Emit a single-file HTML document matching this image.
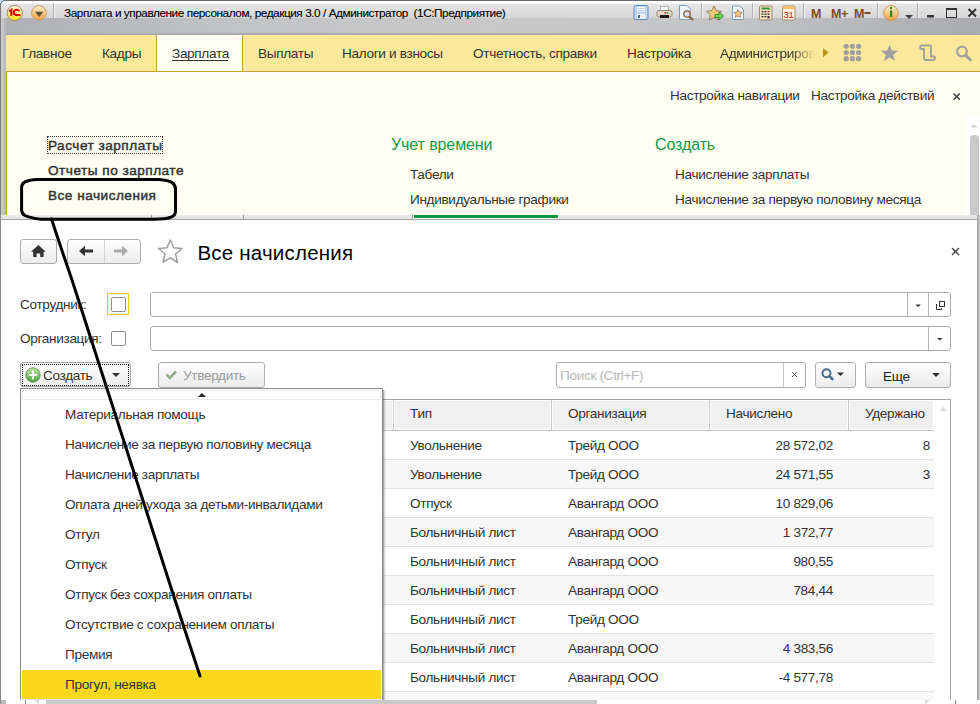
<!DOCTYPE html>
<html><head><meta charset="utf-8">
<style>
*{margin:0;padding:0;box-sizing:border-box}
html,body{width:980px;height:704px;overflow:hidden;background:#fff}
body{position:relative;font-family:"Liberation Sans",sans-serif;font-size:13.6px;letter-spacing:-0.33px;color:#333}
.a{position:absolute;white-space:nowrap}
.mi{top:46px;color:#333}
.tb{height:25px;border:1px solid #aeaeae;border-radius:3px;background:linear-gradient(#fefefe,#ececec)}
.cell{color:#333}
.dd{left:65px;color:#333}
.sep{width:1px;height:15px;top:3px;background:linear-gradient(#b8b8b8,#a8a8a8);border-right:1px solid #f4f4f4;width:2px}
</style></head><body>
<!-- ===== title bar ===== -->
<div class="a" style="left:0;top:0;width:980px;height:35px;background:linear-gradient(90deg,#aeb0b4 0%,#c3c4c6 25%,#c9c9c9 50%,#c3c4c6 75%,#a9abaf 100%)"></div>
<div class="a" style="left:0;top:0;width:980px;height:18px;background:linear-gradient(#ffffff 0,#fdfdfd 3px,#e6e6e6 4px,#d6d6d6 18px)"></div>
<div class="a" style="left:0;top:0;width:980px;height:1px;background:#6a6a6a"></div>
<div class="a" style="left:0;top:33px;width:980px;height:2px;background:#a9abb0"></div>
<div class="a" style="left:0;top:0;width:1px;height:704px;background:#7a7a7a"></div>
<div class="a" style="left:1px;top:18px;width:5px;height:197px;background:linear-gradient(90deg,#cfcfcf,#b4b5b9)"></div>
<svg class="a" style="left:0;top:0" width="8" height="8"><path d="M0 0 L6 0 Q0.5 0.5 0 6 Z" fill="#c9d6ea"/><path d="M6 0.5 Q0.5 0.5 0.5 6" fill="none" stroke="#707070" stroke-width="1"/></svg>
<div class="a" style="left:64px;top:6px;font-size:11.8px;letter-spacing:-0.45px;color:#000;-webkit-text-stroke:0.1px #000">Зарплата и управление персоналом, редакция 3.0 / Администратор&nbsp; (1С:Предприятие)</div>
<!-- title icons -->
<svg class="a" style="left:0;top:0" width="980" height="35">
 <defs>
  <linearGradient id="g1c" x1="0" y1="0" x2="0" y2="1"><stop offset="0" stop-color="#fffbe0"/><stop offset=".45" stop-color="#fff29a"/><stop offset="1" stop-color="#f6e200"/></linearGradient>
  <linearGradient id="gor" x1="0" y1="0" x2="0" y2="1"><stop offset="0" stop-color="#fdebd0"/><stop offset=".5" stop-color="#f7c98a"/><stop offset="1" stop-color="#f2a640"/></linearGradient>
 </defs>
 <circle cx="14.8" cy="12.9" r="7.6" fill="url(#g1c)" stroke="#a88a70" stroke-width="1"/>
 <path d="M9.2 11.3 L11.3 9.8 L11.3 15.8" fill="none" stroke="#e00000" stroke-width="2.2"/>
 <path d="M19.2 11.2 Q18.5 9.8 16.4 9.8 Q13.6 10 13.8 12.6 Q14 14.8 16 14.9 L20.4 14.9" fill="none" stroke="#e00000" stroke-width="2"/>
 <circle cx="38.9" cy="12.8" r="7.3" fill="url(#gor)" stroke="#c89a60" stroke-width="1"/>
 <path d="M35 11.7 L43.4 11.7 L39.2 17 Z" fill="#5e5340"/>
 <rect x="53" y="3" width="1" height="15" fill="#b0b0b0"/><rect x="54" y="3" width="1" height="15" fill="#f2f2f2"/>
 <!-- save -->
 <rect x="634" y="5.5" width="14" height="14" rx="1.5" fill="#c4dcf2" stroke="#5e8cc0"/>
 <rect x="636.5" y="6.5" width="9" height="5.5" fill="#fafcff" stroke="#9cbde0" stroke-width=".6"/>
 <rect x="637.5" y="8.2" width="7" height=".7" fill="#a8c4e0"/><rect x="637.5" y="10" width="7" height=".7" fill="#a8c4e0"/>
 <rect x="637" y="14" width="8" height="5" fill="#eef2f6"/><rect x="638" y="15" width="2" height="3" fill="#4a6a8a"/>
 <!-- print -->
 <rect x="660.5" y="6.5" width="8" height="5" fill="#fbfbfb" stroke="#a0a0a0" stroke-width=".8"/>
 <rect x="657" y="10.5" width="15" height="6.5" rx="2" fill="#e2d6c6" stroke="#9a8470" stroke-width="1"/>
 <rect x="660" y="15" width="9" height="3.2" fill="#1a1a1a"/>
 <rect x="660.5" y="18.2" width="8" height="1.3" fill="#f4f4f4" stroke="#aaa" stroke-width=".4"/>
 <circle cx="665.3" cy="12.8" r=".9" fill="#e02020"/><circle cx="667.6" cy="12.8" r=".9" fill="#20b020"/>
 <!-- preview -->
 <path d="M679.5 5.5 L687 5.5 L690 8.5 L690 19.5 L679.5 19.5 Z" fill="#f2f6fb" stroke="#7c9cc0"/>
 <circle cx="687" cy="14" r="3.2" fill="#cfe0f4" stroke="#8a6038" stroke-width="1.3"/>
 <path d="M689 16.5 L693 20" stroke="#8a5a30" stroke-width="2.2"/>
 <rect x="701" y="3" width="1" height="15" fill="#b0b0b0"/><rect x="702" y="3" width="1" height="15" fill="#f2f2f2"/>
 <!-- star arrow -->
 <path d="M714 6 L716.3 10.7 L721.5 11.3 L717.7 14.8 L718.7 20 L714 17.5 L709.3 20 L710.3 14.8 L706.5 11.3 L711.7 10.7 Z" fill="#f6c879" stroke="#7a6a50" stroke-width=".8"/>
 <path d="M715 14.5 L719 14.5 L719 12 L723.5 16 L719 20 L719 17.5 L715 17.5 Z" fill="#6cd05a" stroke="#2f8a2a" stroke-width=".9"/>
 <!-- doc star -->
 <path d="M732.5 6 L740 6 L743.5 9.5 L743.5 19.5 L732.5 19.5 Z" fill="#f8fbff" stroke="#7c9cc0"/>
 <path d="M738 9.5 L739.3 12.2 L742.2 12.5 L740 14.5 L740.6 17.4 L738 16 L735.4 17.4 L736 14.5 L733.8 12.5 L736.7 12.2 Z" fill="#f6c879" stroke="#7a6a50" stroke-width=".7"/>
 <rect x="752" y="3" width="1" height="15" fill="#b0b0b0"/><rect x="753" y="3" width="1" height="15" fill="#f2f2f2"/>
 <!-- calc -->
 <rect x="759.5" y="6" width="12.5" height="14" rx="1" fill="#f7e3bd" stroke="#9a8a70"/>
 <rect x="761.5" y="7.5" width="8.5" height="2" fill="#3a9a3a"/>
 <g fill="#333"><rect x="761.5" y="11" width="2" height="1.3"/><rect x="764.5" y="11" width="2" height="1.3"/><rect x="767.5" y="11" width="2" height="1.3" fill="#d02020"/>
 <rect x="761.5" y="13.5" width="2" height="1.3"/><rect x="764.5" y="13.5" width="2" height="1.3"/><rect x="767.5" y="13.5" width="2" height="1.3"/>
 <rect x="761.5" y="16" width="2" height="1.3"/><rect x="764.5" y="16" width="2" height="1.3"/><rect x="767.5" y="16" width="2" height="2.5"/></g>
 <!-- calendar -->
 <rect x="782.5" y="6" width="12.5" height="14" rx="1" fill="#fbf0dc" stroke="#a09070"/>
 <rect x="782.5" y="6" width="12.5" height="3" fill="#f0c070"/>
 <text x="783.6" y="18.3" font-family="Liberation Sans" font-size="9.5" fill="#e02010">31</text>
 <rect x="803" y="3" width="1" height="15" fill="#b0b0b0"/><rect x="804" y="3" width="1" height="15" fill="#f2f2f2"/>
 <g font-family="Liberation Sans" font-weight="bold" font-size="12.5" fill="#7c4c24">
  <text x="811" y="18">M</text><text x="831" y="18">M+</text><text x="854" y="18">M</text><rect x="864.5" y="12" width="6" height="2" fill="#7c4c24"/>
 </g>
 <rect x="877" y="3" width="1" height="15" fill="#b0b0b0"/><rect x="878" y="3" width="1" height="15" fill="#f2f2f2"/>
 <!-- info -->
 <circle cx="891" cy="13" r="7.4" fill="url(#gor)" stroke="#c08a40" stroke-width=".8"/>
 <rect x="890" y="10.5" width="2.2" height="6.5" fill="#2a8a20"/><circle cx="891.1" cy="8" r="1.2" fill="#2a8a20"/>
 <path d="M905 15 L913 15 L909 19 Z" fill="#444"/>
 <rect x="917" y="3" width="1" height="15" fill="#b0b0b0"/><rect x="918" y="3" width="1" height="15" fill="#f2f2f2"/>
 <!-- min max close -->
 <rect x="927" y="15" width="7" height="2.5" fill="#333"/>
 <rect x="946.5" y="8.5" width="10" height="9" fill="none" stroke="#333" stroke-width="1"/><rect x="946" y="8" width="11" height="2" fill="#333"/>
 <path d="M968.5 9 L976 16.5 M976 9 L968.5 16.5" stroke="#333" stroke-width="2"/>
</svg>

<!-- ===== menu bar ===== -->
<div class="a" style="left:6px;top:35px;width:974px;height:37px;background:#fbe99b;border-bottom:1px solid #c0a32c"></div>
<div class="a" style="left:156px;top:35px;width:87px;height:36px;background:#fefdf0;border-left:1px solid #c0a32c;border-right:1px solid #c0a32c"></div>
<div class="a mi" style="left:22px">Главное</div>
<div class="a mi" style="left:102px">Кадры</div>
<div class="a mi" style="left:172px">Зарплата</div>
<div class="a" style="left:172px;top:60px;width:56px;height:1px;background:#333"></div>
<div class="a mi" style="left:258px">Выплаты</div>
<div class="a mi" style="left:342px">Налоги и взносы</div>
<div class="a mi" style="left:473px">Отчетность, справки</div>
<div class="a mi" style="left:627px">Настройка</div>
<div class="a mi" style="left:720px;width:95px;overflow:hidden;-webkit-mask-image:linear-gradient(90deg,#000 75%,transparent)">Администрирование</div>
<svg class="a" style="left:780px;top:36px" width="200" height="35">
 <path d="M43 12 L48.5 16.5 L43 21.5 Z" fill="#b8941c"/>
 <g fill="#a0a0a0">
  <circle cx="66.2" cy="10.3" r="2.6"/><circle cx="72.4" cy="10.3" r="2.6"/><circle cx="78.6" cy="10.3" r="2.6"/>
  <circle cx="66.2" cy="16.5" r="2.6"/><circle cx="72.4" cy="16.5" r="2.6"/><circle cx="78.6" cy="16.5" r="2.6"/>
  <circle cx="66.2" cy="22.7" r="2.6"/><circle cx="72.4" cy="22.7" r="2.6"/><circle cx="78.6" cy="22.7" r="2.6"/>
 </g>
 <path d="M109.5 8.4 L111.8 14.4 L118.2 14.8 L113.2 18.8 L114.9 25.0 L109.5 21.5 L104.1 25.0 L105.8 18.8 L100.8 14.8 L107.2 14.4 Z" fill="#a0a0a0"/>
 <path d="M142 9.5 L150 9.5 Q151 9.5 151 10.5 L151 21.5 M142 9.5 Q140 9.5 140 11.5 Q140 13 142 13 L144 13 L144 22 Q144 24 146 24 L153 24 Q155 24 155 22 Q155 20.5 153 20.5 L151 20.5" fill="none" stroke="#a0a0a0" stroke-width="1.8"/>
 <circle cx="182" cy="15.5" r="4.8" fill="none" stroke="#a0a0a0" stroke-width="2.2"/>
 <path d="M185.5 19 L190.5 24" stroke="#a0a0a0" stroke-width="2.8" stroke-linecap="round"/>
</svg>

<!-- ===== nav panel ===== -->
<div class="a" style="left:6px;top:72px;width:974px;height:143px;background:#fefef2;border-left:1px solid #c0a32c"></div>
<div class="a" style="left:7px;top:72px;width:1px;height:143px;background:#fff"></div>
<div class="a" style="left:7px;top:72px;width:973px;height:1px;background:#fff"></div>
<div class="a" style="left:966px;top:115px;width:14px;height:100px;background:#fff"></div>
<div class="a" style="left:970px;top:135px;width:9px;height:80px;background:#c9c9c9;border-radius:4px 4px 0 0"></div>
<svg class="a" style="left:965px;top:118px" width="15" height="14"><path d="M5.5 9.5 L9 6 L12.5 9.5 Z" fill="#d2d2d2"/></svg>
<div class="a" style="left:670px;top:88px">Настройка навигации</div>
<div class="a" style="left:811px;top:88px">Настройка действий</div>
<svg class="a" style="left:949px;top:88px" width="14" height="14"><path d="M4.5 5.5 L10.8 11.8 M10.8 5.5 L4.5 11.8" stroke="#3a3a3a" stroke-width="1.5"/></svg>
<div class="a" style="left:47px;top:136px;width:116px;height:18px;border:1px dotted #333"></div>
<div class="a" style="left:48px;top:138px;-webkit-text-stroke:0.45px #333;letter-spacing:0.5px;color:#333">Расчет зарплаты</div>
<div class="a" style="left:48px;top:163px;-webkit-text-stroke:0.45px #333;letter-spacing:0.5px;color:#333">Отчеты по зарплате</div>
<div class="a" style="left:48px;top:188px;-webkit-text-stroke:0.45px #333;letter-spacing:0.5px;color:#333">Все начисления</div>
<div class="a" style="left:391px;top:135.5px;font-size:16px;letter-spacing:-0.1px;color:#169a48">Учет времени</div>
<div class="a" style="left:655px;top:135.5px;font-size:16px;letter-spacing:-0.1px;color:#169a48">Создать</div>
<div class="a" style="left:410px;top:167px">Табели</div>
<div class="a" style="left:410px;top:192px">Индивидуальные графики</div>
<div class="a" style="left:675px;top:167px">Начисление зарплаты</div>
<div class="a" style="left:675px;top:192px">Начисление за первую половину месяца</div>


<!-- ===== FORM ===== -->
<div class="a" style="left:0;top:215px;width:980px;height:489px;background:#fff"></div>
<div class="a" style="left:1px;top:215px;width:976px;height:5px;background:linear-gradient(#ececec,#dedede)"></div>
<div class="a" style="left:1px;top:219px;width:976px;height:1px;background:#a3a3a3"></div>
<div class="a" style="left:0;top:215px;width:1px;height:489px;background:#8a8a8a"></div>
<div class="a" style="left:977px;top:215px;width:3px;height:489px;background:linear-gradient(90deg,#9c9c9c,#b5b5b5,#cfcfcf)"></div>
<div class="a" style="left:413px;top:215px;width:146px;height:4px;background:#fff"></div>
<div class="a" style="left:414px;top:215px;width:144px;height:3px;background:#0e9440"></div>
<div class="a" style="left:151px;top:215px;width:1px;height:4px;background:#909090"></div>
<div class="a" style="left:243px;top:215px;width:1px;height:4px;background:#909090"></div>
<div class="a" style="left:412px;top:215px;width:1px;height:4px;background:#909090"></div>
<!-- nav buttons -->
<div class="a tb" style="left:20px;top:239px;width:37px;height:25px"></div>
<div class="a tb" style="left:67px;top:239px;width:74px;height:25px"></div>
<div class="a" style="left:104px;top:240px;width:1px;height:23px;background:#d4d4d4"></div>
<svg class="a" style="left:0;top:230px" width="200" height="45">
 <path d="M38.4 15 L31 21.8 L33.2 21.8 L33.2 27 L36.6 27 L36.6 23.5 L40.2 23.5 L40.2 27 L43.6 27 L43.6 21.8 L45.8 21.8 Z" fill="#333"/>
 <path d="M79 21 L85 15.8 L85 19.5 L93 19.5 L93 22.5 L85 22.5 L85 26.2 Z" fill="#333"/>
 <path d="M128 21 L122 15.8 L122 19.5 L114 19.5 L114 22.5 L122 22.5 L122 26.2 Z" fill="#ababab"/>
 <path d="M170.3 10.0 L173.6 17.8 L182.0 18.5 L175.6 24.0 L177.5 32.3 L170.3 27.9 L163.1 32.3 L165.0 24.0 L158.6 18.5 L167.0 17.8 Z" fill="none" stroke="#a0a0a0" stroke-width="1.6" stroke-linejoin="round"/>
</svg>
<div class="a" style="left:197.5px;top:241px;font-size:20.5px;letter-spacing:0.2px;color:#000">Все начисления</div>
<svg class="a" style="left:948px;top:244px" width="14" height="14"><path d="M4 4 L11 11 M11 4 L4 11" stroke="#444" stroke-width="1.4"/></svg>

<!-- filters -->
<div class="a" style="left:20px;top:297px">Сотрудник:</div>
<div class="a" style="left:20px;top:331px">Организация:</div>
<div class="a" style="left:107px;top:293px;width:22px;height:22px;border:1px solid #f5c518"></div>
<div class="a" style="left:111px;top:297px;width:15px;height:15px;border:1px solid #8e8e8e;border-radius:2px;background:#fff"></div>
<div class="a" style="left:111px;top:331px;width:15px;height:15px;border:1px solid #8e8e8e;border-radius:2px;background:#fff"></div>
<div class="a" style="left:150px;top:292px;width:801px;height:25px;border:1px solid #acacac;border-radius:3px;background:#fff"></div>
<div class="a" style="left:907px;top:293px;width:1px;height:23px;background:#b4b4b4"></div>
<div class="a" style="left:928px;top:293px;width:1px;height:23px;background:#b4b4b4"></div>
<div class="a" style="left:150px;top:326px;width:801px;height:25px;border:1px solid #acacac;border-radius:3px;background:#fff"></div>
<div class="a" style="left:928px;top:327px;width:1px;height:23px;background:#b4b4b4"></div>
<svg class="a" style="left:900px;top:290px" width="60" height="65">
 <path d="M15.5 14.5 L21 14.5 L18.25 17 Z" fill="#333"/>
 <rect x="39.5" y="11.5" width="5" height="5" fill="none" stroke="#333" stroke-width="1"/>
 <path d="M36.5 14 L36.5 19.5 L41.5 19.5 L41.5 18" fill="none" stroke="#333" stroke-width="1"/>
 <path d="M37 48 L42.5 48 L39.75 50.5 Z" fill="#333"/>
</svg>

<!-- command bar -->
<div class="a tb" style="left:20px;top:362px;width:111px;height:25px;border-color:#a8a8a8"></div>
<div class="a" style="left:22px;top:364px;width:107px;height:22px;border:1px dotted #111"></div>
<svg class="a" style="left:20px;top:362px" width="112" height="25">
 <defs><linearGradient id="gg" x1="0" y1="0" x2="0" y2="1"><stop offset="0" stop-color="#bfe6a8"/><stop offset=".55" stop-color="#7cc364"/><stop offset="1" stop-color="#4f9a3c"/></linearGradient></defs>
 <circle cx="13" cy="13" r="7.2" fill="url(#gg)" stroke="#5f8f58" stroke-width=".9"/>
 <path d="M13 8.8 L13 17.2 M8.8 13 L17.2 13" stroke="#fff" stroke-width="2.2"/>
 <path d="M92 11 L100 11 L96 15 Z" fill="#333"/>
</svg>
<div class="a" style="left:43px;top:368px">Создать</div>
<div class="a tb" style="left:158px;top:362px;width:107px;height:26px"></div>
<svg class="a" style="left:158px;top:362px" width="30" height="25"><path d="M8.5 12.5 L11.8 15.8 L18 9.5" fill="none" stroke="#98ad8c" stroke-width="2.6"/></svg>
<div class="a" style="left:183px;top:368px;color:#9a9a9a">Утвердить</div>

<div class="a" style="left:556px;top:362px;width:250px;height:26px;border:1px solid #acacac;border-radius:3px;background:#fff"></div>
<div class="a" style="left:783px;top:363px;width:1px;height:24px;background:#c4c4c4"></div>
<div class="a" style="left:560px;top:368px;color:#b8b8b8">Поиск (Ctrl+F)</div>
<svg class="a" style="left:784px;top:362px" width="22" height="25"><path d="M8 10 L13 15 M13 10 L8 15" stroke="#5a5a5a" stroke-width="1"/></svg>
<div class="a tb" style="left:815px;top:362px;width:41px;height:26px"></div>
<svg class="a" style="left:815px;top:362px" width="41" height="25">
 <circle cx="11.5" cy="11.3" r="4" fill="none" stroke="#48698f" stroke-width="1.9"/>
 <path d="M14.4 14.2 L17.4 17.2" stroke="#48698f" stroke-width="2.6" stroke-linecap="round"/>
 <path d="M22 10.5 L29 10.5 L25.5 14 Z" fill="#333"/>
</svg>
<div class="a tb" style="left:865px;top:362px;width:86px;height:26px"></div>
<div class="a" style="left:883px;top:369px;color:#222">Еще</div>
<svg class="a" style="left:865px;top:362px" width="86" height="25"><path d="M67 11 L75 11 L71 15 Z" fill="#333"/></svg>

<!-- ===== TABLE ===== -->
<div class="a" style="left:20px;top:399px;width:931px;height:305px;border:1px solid #a3a3a3;border-bottom:none;background:#fff"></div>
<div class="a" style="left:21px;top:400px;width:913px;height:31px;background:#fff;border-bottom:1px solid #c2c2c2"></div>
<div class="a" style="left:22px;top:401px;width:370px;height:28px;background:#f0f0f0"></div>
<div class="a" style="left:395px;top:401px;width:155px;height:28px;background:#f0f0f0"></div>
<div class="a" style="left:553px;top:401px;width:155px;height:28px;background:#f0f0f0"></div>
<div class="a" style="left:711px;top:401px;width:136px;height:28px;background:#f0f0f0"></div>
<div class="a" style="left:850px;top:401px;width:83px;height:28px;background:#f0f0f0"></div>
<div class="a" style="left:393px;top:400px;width:1px;height:30px;background:#c8c8c8"></div>
<div class="a" style="left:551px;top:400px;width:1px;height:30px;background:#c8c8c8"></div>
<div class="a" style="left:709px;top:400px;width:1px;height:30px;background:#c8c8c8"></div>
<div class="a" style="left:848px;top:400px;width:1px;height:30px;background:#c8c8c8"></div>
<div class="a cell" style="left:410px;top:406px">Тип</div>
<div class="a cell" style="left:568px;top:406px">Организация</div>
<div class="a cell" style="left:726px;top:406px">Начислено</div>
<div class="a cell" style="left:865px;top:406px">Удержано</div>
<svg class="a" style="left:936px;top:405px" width="14" height="12"><path d="M3 6 L7 2 L11 6 Z" fill="#dcdcdc"/></svg>
<div class="a" style="left:21px;top:431px;width:913px;height:29px;background:#fff;border-bottom:1px solid #e2e2e2"></div>
<div class="a cell" style="left:410px;top:438px">Увольнение</div>
<div class="a cell" style="left:568px;top:438px">Трейд ООО</div>
<div class="a cell" style="left:700px;width:133px;top:438px;text-align:right">28 572,02</div>
<div class="a cell" style="left:850px;width:80px;top:438px;text-align:right">8</div>
<div class="a" style="left:21px;top:460px;width:913px;height:29px;background:#f7f7f7;border-bottom:1px solid #e2e2e2"></div>
<div class="a cell" style="left:410px;top:467px">Увольнение</div>
<div class="a cell" style="left:568px;top:467px">Трейд ООО</div>
<div class="a cell" style="left:700px;width:133px;top:467px;text-align:right">24 571,55</div>
<div class="a cell" style="left:850px;width:80px;top:467px;text-align:right">3</div>
<div class="a" style="left:21px;top:489px;width:913px;height:29px;background:#fff;border-bottom:1px solid #e2e2e2"></div>
<div class="a cell" style="left:410px;top:496px">Отпуск</div>
<div class="a cell" style="left:568px;top:496px">Авангард ООО</div>
<div class="a cell" style="left:700px;width:133px;top:496px;text-align:right">10 829,06</div>
<div class="a" style="left:21px;top:518px;width:913px;height:29px;background:#f7f7f7;border-bottom:1px solid #e2e2e2"></div>
<div class="a cell" style="left:410px;top:525px">Больничный лист</div>
<div class="a cell" style="left:568px;top:525px">Авангард ООО</div>
<div class="a cell" style="left:700px;width:133px;top:525px;text-align:right">1 372,77</div>
<div class="a" style="left:21px;top:547px;width:913px;height:29px;background:#fff;border-bottom:1px solid #e2e2e2"></div>
<div class="a cell" style="left:410px;top:554px">Больничный лист</div>
<div class="a cell" style="left:568px;top:554px">Авангард ООО</div>
<div class="a cell" style="left:700px;width:133px;top:554px;text-align:right">980,55</div>
<div class="a" style="left:21px;top:576px;width:913px;height:29px;background:#f7f7f7;border-bottom:1px solid #e2e2e2"></div>
<div class="a cell" style="left:410px;top:583px">Больничный лист</div>
<div class="a cell" style="left:568px;top:583px">Авангард ООО</div>
<div class="a cell" style="left:700px;width:133px;top:583px;text-align:right">784,44</div>
<div class="a" style="left:21px;top:605px;width:913px;height:29px;background:#fff;border-bottom:1px solid #e2e2e2"></div>
<div class="a cell" style="left:410px;top:612px">Больничный лист</div>
<div class="a cell" style="left:568px;top:612px">Трейд ООО</div>
<div class="a" style="left:21px;top:634px;width:913px;height:29px;background:#f7f7f7;border-bottom:1px solid #e2e2e2"></div>
<div class="a cell" style="left:410px;top:641px">Больничный лист</div>
<div class="a cell" style="left:568px;top:641px">Авангард ООО</div>
<div class="a cell" style="left:700px;width:133px;top:641px;text-align:right">4 383,56</div>
<div class="a" style="left:21px;top:663px;width:913px;height:29px;background:#fff;border-bottom:1px solid #e2e2e2"></div>
<div class="a cell" style="left:410px;top:670px">Больничный лист</div>
<div class="a cell" style="left:568px;top:670px">Авангард ООО</div>
<div class="a cell" style="left:700px;width:133px;top:670px;text-align:right">-4 577,78</div>
<div class="a" style="left:21px;top:692px;width:913px;height:8px;background:#f8f8f8"></div>
<div class="a" style="left:1px;top:700px;width:979px;height:4px;background:#fff"></div>
<div class="a" style="left:46px;top:700px;width:551px;height:4px;background:#c9c9c9"></div>
<div class="a" style="left:25px;top:700px;width:1px;height:4px;background:#8a8a8a"></div>
<div class="a" style="left:1px;top:700px;width:5px;height:4px;background:#bcbcbc"></div>
<svg class="a" style="left:924px;top:699px" width="8" height="5"><path d="M1 1 L6 1 L1 5 Z" fill="#d8d8d8"/></svg>
<svg class="a" style="left:33px;top:699px" width="8" height="5"><path d="M6 1 L1 1 L6 5 Z" fill="#d8d8d8"/></svg>
<div class="a" style="left:955px;top:700px;width:1px;height:4px;background:#8a8a8a"></div>
<!-- ===== DROPDOWN ===== -->
<div class="a" style="left:383px;top:390px;width:3px;height:310px;background:linear-gradient(90deg,rgba(0,0,0,.42),rgba(0,0,0,.15),rgba(0,0,0,0))"></div>
<div class="a" style="left:20px;top:388px;width:363px;height:312px;background:#fff;border:1px solid #8c8c8c;border-bottom-color:#e0e0e0"></div>
<div class="a" style="left:22px;top:390px;width:359px;height:10px;border:1px solid #ececec;background:#fff"></div>
<svg class="a" style="left:195px;top:390px" width="14" height="10"><path d="M3 7 L7 3 L11 7 Z" fill="#222"/></svg>
<div class="a dd" style="top:407px">Материальная помощь</div>
<div class="a dd" style="top:437px">Начисление за первую половину месяца</div>
<div class="a dd" style="top:467px">Начисление зарплаты</div>
<div class="a dd" style="top:497px">Оплата дней ухода за детьми-инвалидами</div>
<div class="a dd" style="top:527px">Отгул</div>
<div class="a dd" style="top:557px">Отпуск</div>
<div class="a dd" style="top:587px">Отпуск без сохранения оплаты</div>
<div class="a dd" style="top:617px">Отсутствие с сохранением оплаты</div>
<div class="a dd" style="top:647px">Премия</div>
<div class="a" style="left:22px;top:670px;width:359px;height:29px;background:#fad81e"></div>
<div class="a dd" style="top:677px">Прогул, неявка</div>
<svg class="a" style="left:0;top:0" width="980" height="704">
<path d="M37.5 179.4 L159 179.4 Q168 180 172 182.5 Q175.5 185 175.5 189 L175.5 211 Q175.5 216 170 217.5 Q165 219 155 219.2 L41 219.2 Q30 218 25 215.5 Q21.6 213.5 21.6 210 L21.6 187.5 Q21.6 183.5 25 181.8 Q30 179.4 37.5 179.4 Z" fill="none" stroke="#000" stroke-width="3"/>
<path d="M51.5 219 Q60 245 72 280 L175 600 L200 676" fill="none" stroke="#000" stroke-width="3" stroke-linecap="round"/>
</svg>
</body></html>
